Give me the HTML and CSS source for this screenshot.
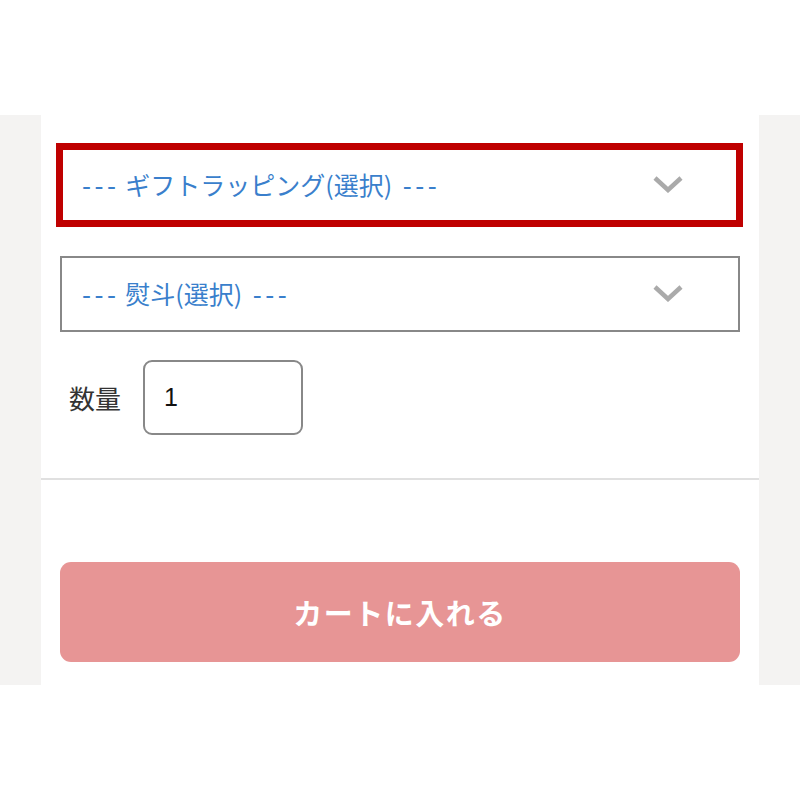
FILE: index.html
```html
<!DOCTYPE html>
<html lang="ja">
<head>
<meta charset="utf-8">
<link rel="stylesheet" href="styles.css">
</head>
<body>
<div class="top"></div>
<div class="panel">
  <div class="content">
    <div class="form">
      <div class="select select-active">
        <span class="select-text"><span class="dash">---</span> ギフトラッピング(選択)<span class="gap"> </span><span class="dash">---</span></span>
        <svg class="chev" width="32" height="18" viewBox="0 0 32 18"><polyline points="3,3 16,15 29,3" fill="none" stroke="#aaaaaa" stroke-width="4.5"/></svg>
      </div>
      <div class="select">
        <span class="select-text"><span class="dash">---</span> 熨斗(選択)<span class="gap"> </span><span class="dash">---</span></span>
        <svg class="chev" width="32" height="18" viewBox="0 0 32 18"><polyline points="3,3 16,15 29,3" fill="none" stroke="#aaaaaa" stroke-width="4.5"/></svg>
      </div>
      <div class="qty">
        <span class="qty-label">数量</span>
        <div class="qty-input">1</div>
      </div>
    </div>
    <div class="divider"></div>
    <div class="actions">
      <button class="cart">カートに入れる</button>
    </div>
  </div>
</div>
</body>
</html>
```
FILE: styles.css
```css
html, body {
  margin: 0;
  padding: 0;
  background: #ffffff;
  font-family: "Noto Sans CJK JP", "Noto Sans", sans-serif;
}
.top {
  height: 115px;
}
.panel {
  background: #f4f3f2;
  padding: 0 41px;
}
.content {
  background: #ffffff;
  height: 570px;
  display: flex;
  flex-direction: column;
}
.form {
  padding: 28px 19px 43px;
  display: flex;
  flex-direction: column;
  gap: 29px;
}
.select {
  height: 76px;
  box-sizing: border-box;
  border: 2px solid #888888;
  display: flex;
  align-items: center;
  justify-content: space-between;
  padding: 0 54px 0 20px;
}
.select-active {
  height: 84px;
  border: 7px solid #bf0000;
  margin: 0 -3px 0 -4px;
  padding: 0 52px 0 19px;
}
.select-text {
  color: #3a7fcc;
  font-size: 25px;
  line-height: 1;
  white-space: pre;
}
.dash {
  font-family: "DejaVu Sans", sans-serif;
  letter-spacing: 3.5px;
}
.gap {
  word-spacing: 5px;
}
.chev {
  display: block;
  margin-top: -2px;
}
.qty {
  display: flex;
  align-items: center;
  gap: 22px;
  padding-left: 9px;
  margin-top: -1px;
}
.qty-label {
  font-size: 26px;
  color: #333333;
}
.qty-input {
  width: 160px;
  height: 75px;
  box-sizing: border-box;
  border: 2px solid #888888;
  border-radius: 9px;
  display: flex;
  align-items: center;
  padding-left: 19px;
  font-family: "Liberation Sans", sans-serif;
  font-size: 25px;
  color: #111111;
}
.divider {
  height: 2px;
  background: #e0e0e0;
}
.actions {
  padding: 82px 19px 22px;
}
.cart {
  display: block;
  width: 100%;
  height: 100px;
  border: none;
  border-radius: 11px;
  background: #e79595;
  color: #ffffff;
  font-family: "Noto Sans CJK JP", sans-serif;
  font-weight: bold;
  font-size: 29px;
  letter-spacing: 1.5px;
}
```
